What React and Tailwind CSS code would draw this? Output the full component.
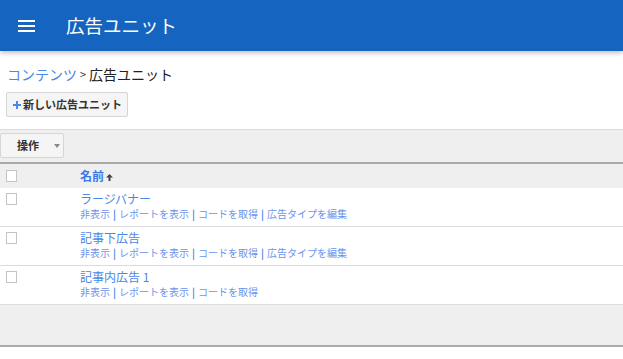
import React from 'react'

const rows = [
  { name: 'ラージバナー', links: ['非表示', 'レポートを表示', 'コードを取得', '広告タイプを編集'] },
  { name: '記事下広告', links: ['非表示', 'レポートを表示', 'コードを取得', '広告タイプを編集'] },
  { name: '記事内広告 1', links: ['非表示', 'レポートを表示', 'コードを取得'] }
]

function Checkbox() {
  return <div className="w-[11px] h-[12px] border border-[#c4c4c4] bg-white" />
}

export default function App() {
  return (
    <div
      className="w-[623px] h-[359px] bg-white overflow-hidden text-[#333]"
      style={{ fontFamily: '"Noto Sans CJK JP", "Noto Sans", sans-serif' }}
    >
      {/* ヘッダー */}
      <header className="h-[51px] bg-[#1565c0] flex items-center shadow-[0_2px_5px_rgba(0,0,0,0.25)] relative z-10">
        <div className="ml-[18px] w-[17px] flex flex-col gap-[3px]">
          <span className="h-[2px] bg-white" />
          <span className="h-[2px] bg-white" />
          <span className="h-[2px] bg-white" />
        </div>
        <h1 className="ml-[31px] text-[18.5px] text-white leading-none">広告ユニット</h1>
      </header>

      {/* パンくず */}
      <div className="pl-[7px] pt-[14px] h-[41px] flex items-start text-[14px] leading-[18px]">
        <a className="text-[#4a87e8]">コンテンツ</a>
        <span className="mx-[3px] text-[11px] text-[#333] leading-[18px]">&gt;</span>
        <span className="text-[#222]">広告ユニット</span>
      </div>

      <div className="pl-[6px] h-[37px]">
        <button className="h-[25px] pl-[6px] pr-[5px] flex items-center gap-[1px] bg-[#f5f5f5] border border-[#d6d6d6] rounded-[2px] text-[11px] font-bold text-[#333]">
          <svg width="8" height="8" viewBox="0 0 8 8" className="mr-[1px]">
            <path d="M3 0h2v3h3v2H5v3H3V5H0V3h3z" fill="#4a87e8" />
          </svg>
          新しい広告ユニット
        </button>
      </div>

      {/* ツールバー */}
      <div className="h-[33px] bg-[#efefef] border-t border-[#dcdcdc] pt-[3px]">
        <button className="w-[64px] h-[25px] bg-[#f5f5f5] border border-[#d6d6d6] rounded-[2px] flex items-center pl-[16px] text-[11px] font-bold text-[#333]">
          操作
          <span className="ml-[15px] w-0 h-0 border-l-[3px] border-r-[3px] border-t-[4px] border-l-transparent border-r-transparent border-t-[#888]" />
        </button>
      </div>

      {/* テーブル */}
      <div className="border-t-2 border-[#aaa]">
        <div className="h-[24px] bg-[#efefef] flex items-center">
          <div className="w-[80px] pl-[6px]"><Checkbox /></div>
          <div className="flex items-center gap-[2px] text-[12px] font-bold text-[#3b78e7]">
            名前
            <svg width="7" height="7" viewBox="0 0 7 7" className="mt-[2px]">
              <path d="M3.5 0L7 3.5H4.5V7h-2V3.5H0z" fill="#444" />
            </svg>
          </div>
        </div>
        {rows.map((r, i) => (
          <div key={i} className="h-[39px] border-b border-[#dcdcdc] flex items-start bg-white">
            <div className="w-[80px] pl-[6px] pt-[5px]"><Checkbox /></div>
            <div className="pt-[2px] flex flex-col">
              <span className="text-[12px] leading-[17px] text-[#4a87e8]">{r.name}</span>
              <div className="text-[10px] leading-[14px] flex items-center">
                {r.links.map((l, j) => (
                  <React.Fragment key={j}>
                    {j > 0 && <span className="mx-[3px] text-[#4a87e8] font-bold">|</span>}
                    <span className="text-[#6d94ec]">{l}</span>
                  </React.Fragment>
                ))}
              </div>
            </div>
          </div>
        ))}
        <div className="h-[42px] bg-[#efefef] border-b-2 border-[#aaa]" />
      </div>
    </div>
  )
}
